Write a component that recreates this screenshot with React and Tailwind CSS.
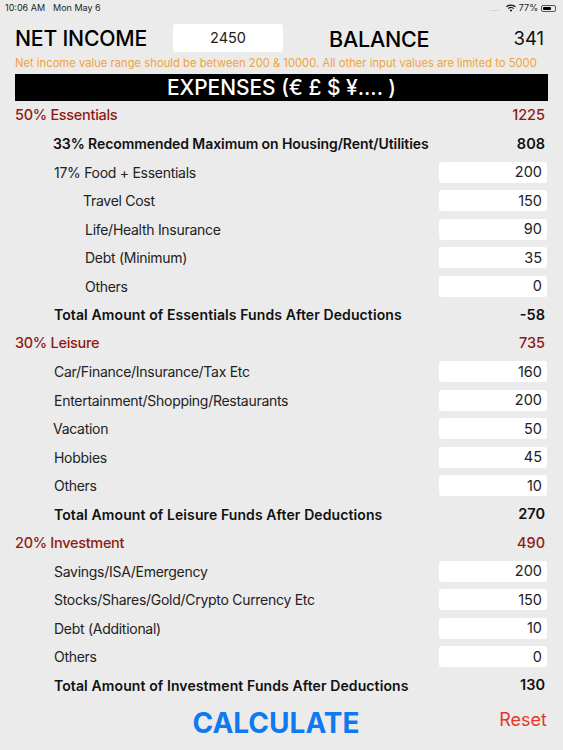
import React from 'react';

const font = { fontFamily: 'Inter, "Noto Sans", sans-serif' };

function BudgetRow({ label, value, indent = 'pl-[38px]' }) {
  return (
    <div className="flex h-[28.5px] items-center justify-between pr-[1px]">
      <span className={`${indent} text-[14px] tracking-[-0.28px] text-[#222]`}>{label}</span>
      <div className="flex h-[21px] w-[108px] items-center justify-end rounded-[3px] bg-white pr-[5px] text-[14.5px] text-[#222]">{value}</div>
    </div>
  );
}

function TotalRow({ label, value, indent = 'pl-[39px]', tracking = 'tracking-[0.1px]' }) {
  return (
    <div className="flex h-[28.5px] items-center justify-between pr-[3px] font-semibold text-[#111]">
      <span className={`${indent} ${tracking} text-[14px]`}>{label}</span>
      <span className="text-[14.5px]">{value}</span>
    </div>
  );
}

function SectionRow({ label, value }) {
  return (
    <div className="flex h-[28.5px] items-center justify-between pr-[3px] text-[14.5px] font-medium text-[#8e1a12]">
      <span className="tracking-[-0.3px]">{label}</span>
      <span>{value}</span>
    </div>
  );
}

function StatusBar() {
  return (
    <div className="flex h-[16px] items-center justify-between pl-[5px] pr-[7px] text-[9px] text-[#222]">
      <div className="flex gap-[8px]">
        <span>10:06 AM</span>
        <span>Mon May 6</span>
      </div>
      <div className="flex items-center gap-[3px]">
        <span className="mr-[3px] text-[7px] leading-none tracking-[0.5px] text-[#aaa]">....</span>
        <svg width="10" height="8" viewBox="0 0 10 8" fill="none" stroke="#111" strokeWidth="1.2">
          <path d="M0.5 2.8 A6.6 6.6 0 0 1 9.5 2.8" />
          <path d="M2.2 4.6 A4.1 4.1 0 0 1 7.8 4.6" />
          <path d="M5 7.8 L3.6 6.2 A2 2 0 0 1 6.4 6.2 Z" fill="#111" stroke="none" />
        </svg>
        <span>77%</span>
        <div className="flex h-[7px] w-[15px] rounded-[2px] border border-[#555] p-[1px]">
          <div className="h-full w-[75%] rounded-[1px] bg-black" />
        </div>
      </div>
    </div>
  );
}

export default function App() {
  return (
    <div className="h-[750px] w-[563px] overflow-hidden bg-[#ebebeb]" style={font}>
      <StatusBar />

      <main className="px-[15px]">
        <div className="mt-[8px] flex h-[30px] items-center">
          <span className="w-[158px] text-[21.2px] font-medium tracking-[-0.2px] text-black">NET INCOME</span>
          <div className="mb-[2px] flex h-[28px] w-[110px] items-center justify-center rounded-[3px] bg-white text-[14.5px] text-[#222]">2450</div>
          <span className="ml-[46px] text-[21.5px] font-medium tracking-[-0.2px] text-black">BALANCE</span>
          <span className="ml-auto pr-[4px] text-[18.5px] text-[#111]">341</span>
        </div>

        <p className="whitespace-nowrap text-[11.24px] leading-[19px] text-[#f0a33c]">
          Net income value range should be between 200 &amp; 10000. All other input values are limited to 5000
        </p>

        <div className="mt-[1px] flex h-[27px] items-center justify-center bg-black text-[20.9px] font-medium text-white">
          EXPENSES (€ £ $ ¥.... )
        </div>

        <SectionRow label="50% Essentials" value="1225" />
        <TotalRow label="33% Recommended Maximum on Housing/Rent/Utilities" value="808" indent="pl-[38px]" tracking="tracking-[-0.08px]" />
        <BudgetRow label="17% Food + Essentials" value="200" indent="pl-[39px]" />
        <BudgetRow label="Travel Cost" value="150" indent="pl-[68px]" />
        <BudgetRow label="Life/Health Insurance" value="90" indent="pl-[70px]" />
        <BudgetRow label="Debt (Minimum)" value="35" indent="pl-[70px]" />
        <BudgetRow label="Others" value="0" indent="pl-[70px]" />
        <TotalRow label="Total Amount of Essentials Funds After Deductions" value="-58" />

        <SectionRow label="30% Leisure" value="735" />
        <BudgetRow label="Car/Finance/Insurance/Tax Etc" value="160" indent="pl-[39px]" />
        <BudgetRow label="Entertainment/Shopping/Restaurants" value="200" indent="pl-[39px]" />
        <BudgetRow label="Vacation" value="50" />
        <BudgetRow label="Hobbies" value="45" indent="pl-[39px]" />
        <BudgetRow label="Others" value="10" indent="pl-[39px]" />
        <TotalRow label="Total Amount of Leisure Funds After Deductions" value="270" />

        <SectionRow label="20% Investment" value="490" />
        <BudgetRow label="Savings/ISA/Emergency" value="200" indent="pl-[39px]" />
        <BudgetRow label="Stocks/Shares/Gold/Crypto Currency Etc" value="150" indent="pl-[39px]" />
        <BudgetRow label="Debt (Additional)" value="10" indent="pl-[39px]" />
        <BudgetRow label="Others" value="0" indent="pl-[39px]" />
        <TotalRow label="Total Amount of Investment Funds After Deductions" value="130" />

        <div className="relative mt-[5px] flex h-[36px] items-center justify-center pr-[11px]">
          <button className="text-[28px] font-bold text-[#0f7af0]">CALCULATE</button>
          <button className="absolute right-[1px] top-[1px] text-[18px] text-[#e8372a]">Reset</button>
        </div>
      </main>
    </div>
  );
}
